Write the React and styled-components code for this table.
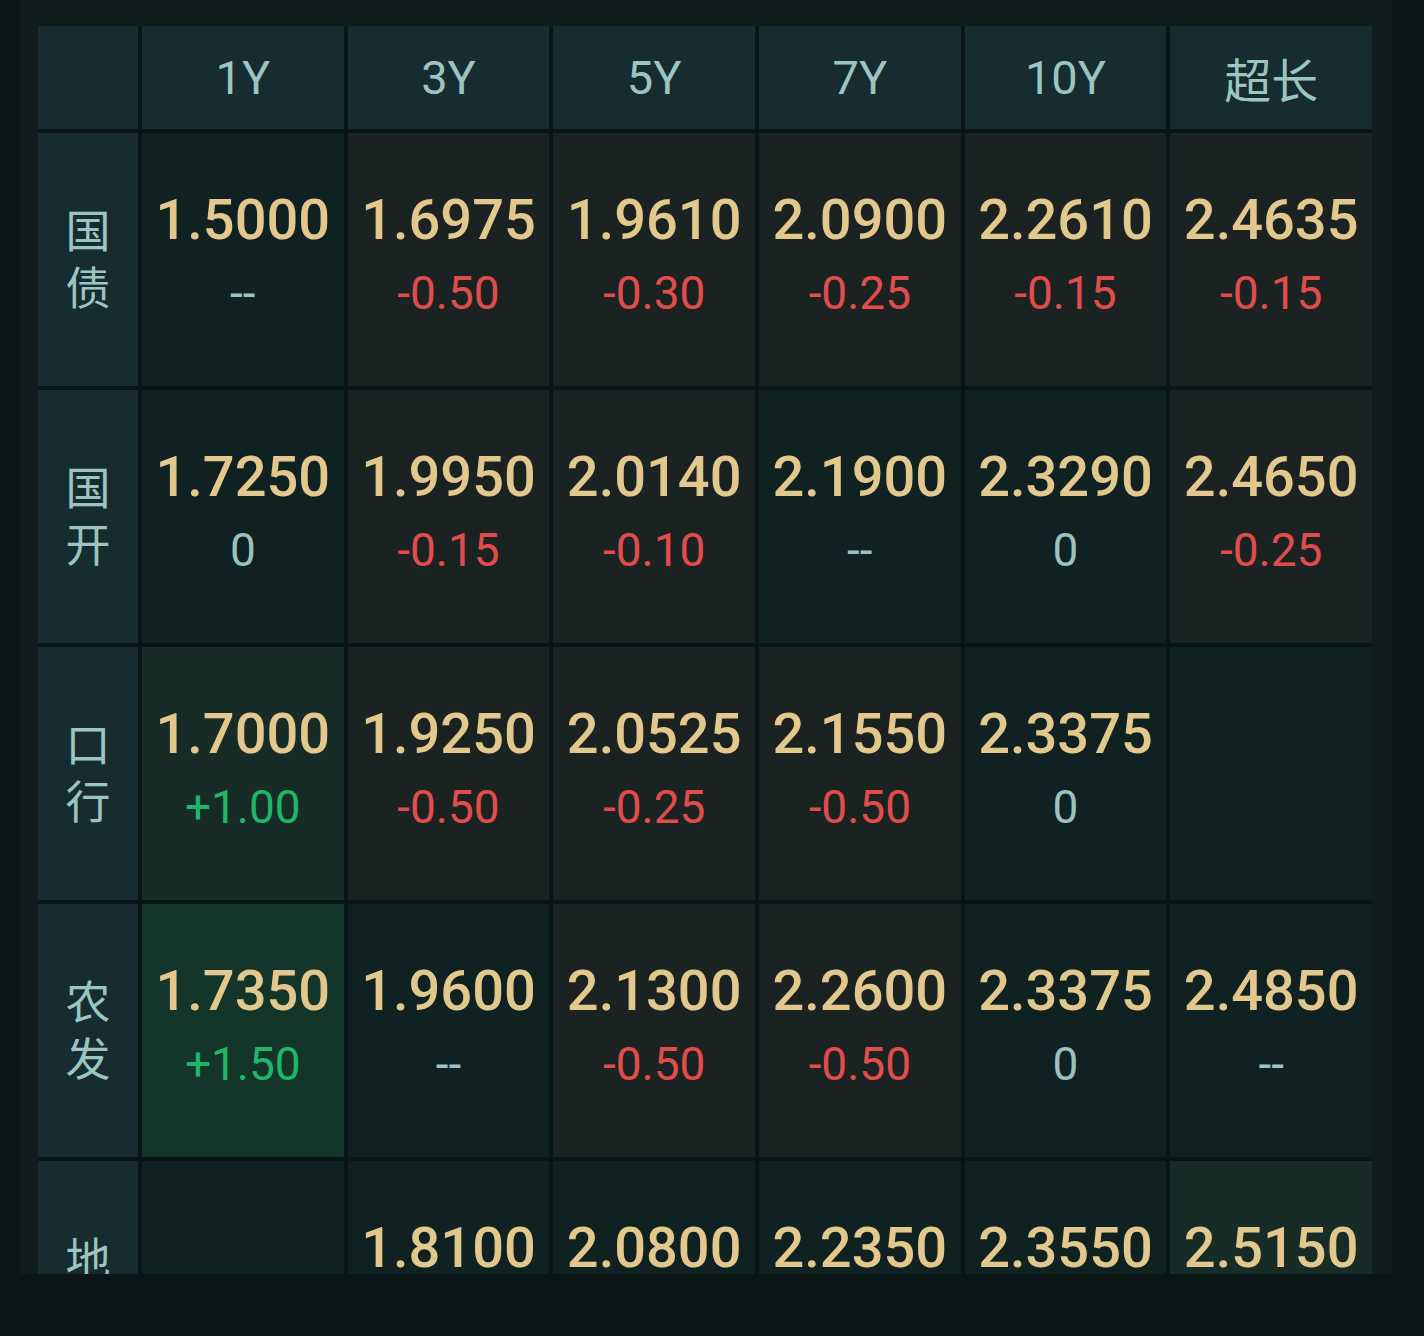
import React from "react";
import styled, { createGlobalStyle } from "styled-components";

const GlobalStyle = createGlobalStyle`
  html, body {
    margin: 0;
    padding: 0;
    background: #0a1716;
  }
  body {
    font-family: Roboto, "Noto Sans", "Noto Sans CJK SC", sans-serif;
  }
`;

const Page = styled.div`
  width: 1424px;
  height: 1336px;
  background: #0a1716;
  overflow: hidden;
`;

const Panel = styled.div`
  margin-left: 20px;
  width: 1372px;
  height: 1274px;
  box-sizing: border-box;
  padding: 26px 19px 0 18px;
  background: #0f1e1d;
  overflow: hidden;
`;

const Grid = styled.div`
  display: grid;
  grid-template-columns: 100px repeat(6, 1fr);
  grid-template-rows: 103px;
  grid-auto-rows: 253px;
  gap: 4px;
  background: #081615;
  width: 1334px;
`;

const HeadCell = styled.div`
  background: #162c2e;
  color: #9cc5c1;
  font-family: Roboto, "Noto Sans CJK SC", sans-serif;
  font-weight: 400;
  font-size: 47px;
  display: flex;
  align-items: center;
  justify-content: center;
`;

const RowHead = styled.div`
  background: #162c2e;
  color: #9cc5c1;
  font-family: "Noto Sans CJK SC", sans-serif;
  font-size: 45px;
  display: flex;
  flex-direction: column;
  align-items: center;
  justify-content: center;
  padding-bottom: 6px;
  box-sizing: border-box;
`;

const RowChar = styled.span`
  display: block;
  height: 57px;
  line-height: 57px;
`;

const bgMap = {
  flat: "#0f2120",
  down: "#1a2321",
  up: "#172c26",
  up2: "#14362a",
};

const Cell = styled.div`
  background: ${(p) => bgMap[p.$tone] || bgMap.flat};
  display: flex;
  flex-direction: column;
  align-items: center;
  justify-content: center;
  padding-bottom: 12px;
  box-sizing: border-box;
  font-family: Roboto, sans-serif;
`;

const Value = styled.div`
  color: #e3c88e;
  font-size: 56px;
  font-weight: 500;
  line-height: 66px;
`;

const colorMap = {
  up: "#1fb56a",
  down: "#e04d4a",
  flat: "#9cc2bf",
};

const Change = styled.div`
  margin-top: 12px;
  color: ${(p) => colorMap[p.$dir]};
  font-size: 46px;
  font-weight: 400;
  line-height: 56px;
`;

const headers = ["1Y", "3Y", "5Y", "7Y", "10Y", "超长"];

const rows = [
  {
    name: ["国", "债"],
    cells: [
      ["1.5000", "--", "flat"],
      ["1.6975", "-0.50", "down"],
      ["1.9610", "-0.30", "down"],
      ["2.0900", "-0.25", "down"],
      ["2.2610", "-0.15", "down"],
      ["2.4635", "-0.15", "down"],
    ],
  },
  {
    name: ["国", "开"],
    cells: [
      ["1.7250", "0", "flat"],
      ["1.9950", "-0.15", "down"],
      ["2.0140", "-0.10", "down"],
      ["2.1900", "--", "flat"],
      ["2.3290", "0", "flat"],
      ["2.4650", "-0.25", "down"],
    ],
  },
  {
    name: ["口", "行"],
    cells: [
      ["1.7000", "+1.00", "up"],
      ["1.9250", "-0.50", "down"],
      ["2.0525", "-0.25", "down"],
      ["2.1550", "-0.50", "down"],
      ["2.3375", "0", "flat"],
      null,
    ],
  },
  {
    name: ["农", "发"],
    cells: [
      ["1.7350", "+1.50", "up", "up2"],
      ["1.9600", "--", "flat"],
      ["2.1300", "-0.50", "down"],
      ["2.2600", "-0.50", "down"],
      ["2.3375", "0", "flat"],
      ["2.4850", "--", "flat"],
    ],
  },
  {
    name: ["地", "方"],
    cells: [
      null,
      ["1.8100", "--", "flat"],
      ["2.0800", "--", "flat"],
      ["2.2350", "--", "flat"],
      ["2.3550", "--", "flat"],
      ["2.5150", "+0.50", "up"],
    ],
  },
];

export default function App() {
  return (
    <Page>
      <GlobalStyle />
      <Panel>
        <Grid>
          <HeadCell />
          {headers.map((h) => (
            <HeadCell key={h}>{h}</HeadCell>
          ))}
          {rows.map((row, ri) => (
            <React.Fragment key={ri}>
              <RowHead>
                {row.name.map((c, i) => (
                  <RowChar key={i}>{c}</RowChar>
                ))}
              </RowHead>
              {row.cells.map((c, ci) =>
                c ? (
                  <Cell key={ci} $tone={c[3] || c[2]}>
                    <Value>{c[0]}</Value>
                    <Change $dir={c[2]}>{c[1]}</Change>
                  </Cell>
                ) : (
                  <Cell key={ci} $tone="flat" />
                )
              )}
            </React.Fragment>
          ))}
        </Grid>
      </Panel>
    </Page>
  );
}
